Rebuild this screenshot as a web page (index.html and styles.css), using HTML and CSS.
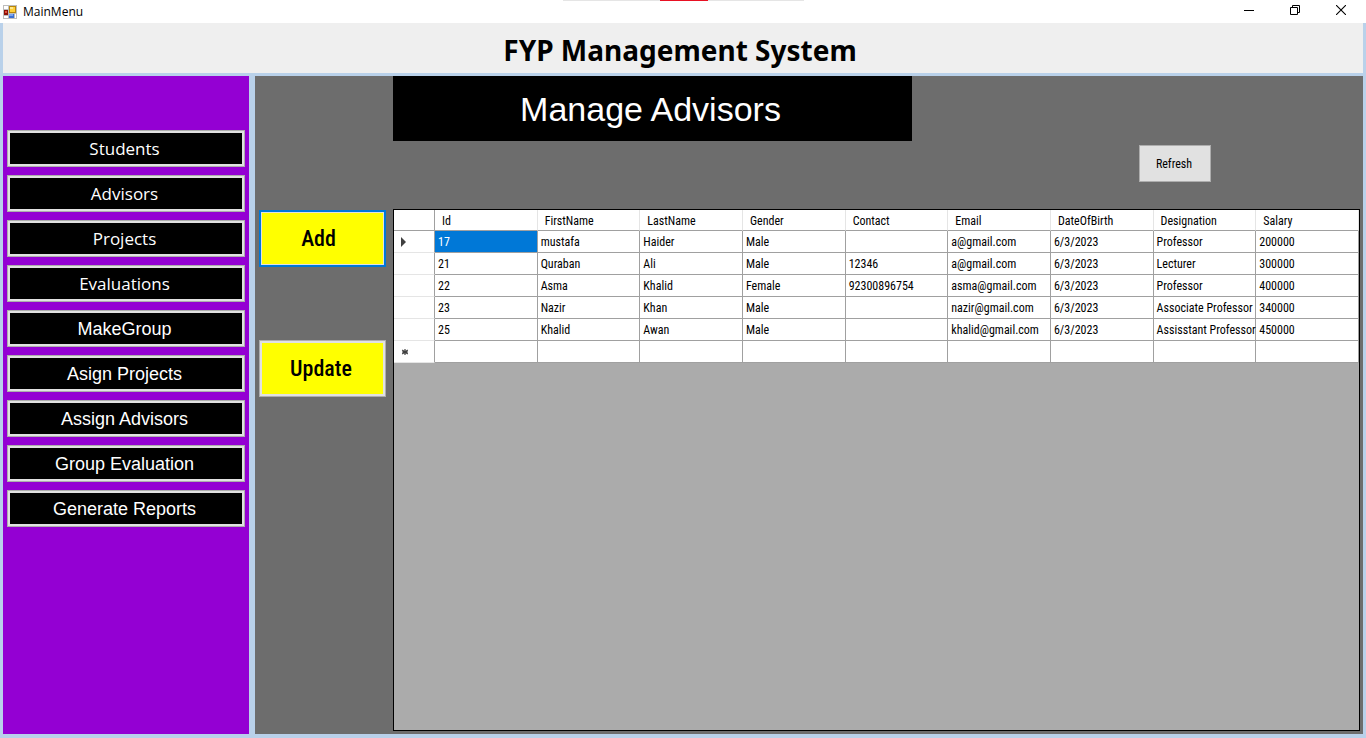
FILE: index.html
```html
<!DOCTYPE html>
<html lang="en">
<head>
<meta charset="utf-8">
<title>MainMenu</title>
<link rel="stylesheet" href="styles.css">
</head>
<body>
<div class="window">
  <header class="titlebar">
    <svg class="app-icon" width="14" height="14" viewBox="0 0 14 14" aria-hidden="true">
      <rect width="14" height="14" fill="#bdbdbd"/>
      <path d="M1 1h4v3H1zM1 11h4v2H1zM12 9h1v4h-1z" fill="#fff"/>
      <rect x="6" y="1" width="7" height="7" fill="#b8860b"/>
      <rect x="7" y="2" width="5" height="5" fill="#ffcf3a"/>
      <rect x="7" y="2" width="3" height="2" fill="#ffe88a"/>
      <rect x="1" y="5" width="4" height="5" fill="#8e1108"/>
      <rect x="2" y="6" width="2" height="2" fill="#e0503c"/>
      <rect x="6" y="9" width="5" height="4" fill="#3b6fd4"/>
      <rect x="6" y="9" width="4" height="2" fill="#7ba5ee"/>
    </svg>
    <span class="app-name">MainMenu</span>
    <div class="share-strip"><span class="share-mark"></span></div>
    <div class="controls">
      <button class="control" type="button" aria-label="Minimize"><svg width="10" height="10" viewBox="0 0 10 10"><path d="M0 5.500h10" stroke="#000"/></svg></button>
      <button class="control" type="button" aria-label="Restore"><svg width="10" height="10" viewBox="0 0 10 10" fill="none" stroke="#000"><path d="M.5 2.500h7v7h-7zM2.500 2.500v-2h7v7h-2"/></svg></button>
      <button class="control" type="button" aria-label="Close"><svg width="10" height="10" viewBox="0 0 10 10"><path d="M0 0l10 10M10 0L0 10" stroke="#000" stroke-width="1.100"/></svg></button>
    </div>
  </header>
  <div class="frame">
    <div class="heading"><h1 class="heading-text">FYP Management System</h1></div>
    <div class="body">
      <nav class="sidebar">
        <button class="nav-button humanist" type="button">Students</button>
        <button class="nav-button humanist" type="button">Advisors</button>
        <button class="nav-button humanist" type="button">Projects</button>
        <button class="nav-button humanist" type="button">Evaluations</button>
        <button class="nav-button" type="button">MakeGroup</button>
        <button class="nav-button" type="button">Asign Projects</button>
        <button class="nav-button" type="button">Assign Advisors</button>
        <button class="nav-button" type="button">Group Evaluation</button>
        <button class="nav-button" type="button">Generate Reports</button>
      </nav>
      <main class="content">
        <div class="actions">
          <button class="action focused" type="button">Add</button>
          <button class="action" type="button">Update</button>
        </div>
        <section class="panel">
          <h2 class="banner">Manage Advisors</h2>
          <div class="tools"><button class="refresh" type="button">Refresh</button></div>
          <div class="grid">
            <table class="table">
              <thead>
                <tr><th class="row-head"></th><th>Id</th><th>FirstName</th><th>LastName</th><th>Gender</th><th>Contact</th><th>Email</th><th>DateOfBirth</th><th>Designation</th><th>Salary</th></tr>
              </thead>
              <tbody>
                <tr><td class="row-head"><svg class="marker" width="5" height="10" viewBox="0 0 5 10"><path d="M0 0l5 5-5 5z" fill="#404040"/></svg></td><td class="selected">17</td><td>mustafa</td><td>Haider</td><td>Male</td><td></td><td>a@gmail.com</td><td>6/3/2023</td><td>Professor</td><td>200000</td></tr>
                <tr><td class="row-head"></td><td>21</td><td>Quraban</td><td>Ali</td><td>Male</td><td>12346</td><td>a@gmail.com</td><td>6/3/2023</td><td>Lecturer</td><td>300000</td></tr>
                <tr><td class="row-head"></td><td>22</td><td>Asma</td><td>Khalid</td><td>Female</td><td>92300896754</td><td>asma@gmail.com</td><td>6/3/2023</td><td>Professor</td><td>400000</td></tr>
                <tr><td class="row-head"></td><td>23</td><td>Nazir</td><td>Khan</td><td>Male</td><td></td><td>nazir@gmail.com</td><td>6/3/2023</td><td>Associate Professor</td><td>340000</td></tr>
                <tr><td class="row-head"></td><td>25</td><td>Khalid</td><td>Awan</td><td>Male</td><td></td><td>khalid@gmail.com</td><td>6/3/2023</td><td>Assisstant Professor</td><td>450000</td></tr>
                <tr><td class="row-head"><svg class="marker" width="8" height="6" viewBox="0 0 8 6"><path d="M4 0v6M1.200 1l5.600 4M6.800 1L1.200 5M1 3h6" stroke="#404040" stroke-width="1.200"/></svg></td><td></td><td></td><td></td><td></td><td></td><td></td><td></td><td></td><td></td></tr>
              </tbody>
            </table>
          </div>
        </section>
      </main>
    </div>
  </div>
</div>
</body>
</html>
```
FILE: styles.css
```css
* { box-sizing: border-box; }

body {
  margin: 0;
  font-family: "Liberation Sans", Arial, sans-serif;
  color: #000;
}

button { font-family: inherit; }

.window {
  display: flex;
  flex-direction: column;
  min-height: 100vh;
  background: #b9d1ea;
}

.titlebar {
  position: relative;
  display: flex;
  align-items: center;
  height: 23px;
  padding-left: 3px;
  gap: 6px;
  background: #fff;
}

.app-name {
  flex: 1;
  font: 12px/16px "Open Sans", sans-serif;
}

.share-strip {
  position: absolute;
  top: 0;
  left: 50%;
  width: 241px;
  height: 1px;
  margin-left: -120px;
  background: #e5e5e5;
}

.share-mark {
  display: block;
  width: 48px;
  height: 1px;
  margin: 0 auto;
  background: #e81123;
}

.controls {
  display: flex;
  align-self: flex-start;
  margin-right: 2px;
}

.control {
  display: flex;
  align-items: center;
  justify-content: center;
  width: 46px;
  height: 20px;
  padding: 0;
  border: 0;
  background: none;
}

.frame {
  flex: 1;
  display: flex;
  flex-direction: column;
  gap: 3px;
  padding: 0 3px 4px;
}

.heading {
  height: 50px;
  background: #efefef;
  text-align: center;
}

.heading-text {
  margin: 0;
  padding: 8px 6px 0 0;
  font: bold 28px/38px "Noto Sans", sans-serif;
}

.body {
  flex: 1;
  display: flex;
  gap: 6px;
}

.sidebar {
  display: flex;
  flex-direction: column;
  gap: 8px;
  width: 246px;
  padding: 54px 4px 0;
  background: #9400d3;
}

.nav-button {
  height: 37px;
  padding: 0 3px 0 0;
  border: 1px solid #adadad;
  box-shadow: inset 0 0 0 2px #e1e1e1;
  background: #000;
  color: #fff;
  font-size: 18px;
  line-height: 24px;
}

.humanist {
  font-family: "Open Sans", sans-serif;
  font-size: 17px;
}

.content {
  flex: 1;
  display: flex;
  min-width: 0;
  padding: 0 3px 3px 4px;
  background: #6d6d6d;
}

.actions {
  display: flex;
  flex-direction: column;
  gap: 73px;
  width: 127px;
  margin-right: 7px;
  padding-top: 134px;
}

.action {
  height: 57px;
  padding: 0 3px 0 0;
  border: 1px solid #adadad;
  box-shadow: inset 0 0 0 2px #e1e1e1;
  background: #ff0;
  font: 500 22px/28px "Roboto Condensed", "Liberation Sans Narrow", Roboto, sans-serif;
}

.focused {
  padding-right: 8px;
  border: 2px solid #0078d7;
  box-shadow: inset 0 0 0 1px #e1e1e1;
}

.panel {
  flex: 1;
  display: flex;
  flex-direction: column;
  min-width: 0;
}

.banner {
  width: 519px;
  height: 65px;
  margin: 0;
  padding-right: 4px;
  background: #000;
  color: #fff;
  font-size: 34px;
  font-weight: normal;
  line-height: 66px;
  text-align: center;
}

.tools {
  display: flex;
  justify-content: flex-end;
  height: 68px;
  padding: 4px 149px 0 0;
}

.refresh {
  width: 72px;
  height: 37px;
  padding: 0 2px 0 0;
  border: 1px solid #adadad;
  background: #e1e1e1;
  font: 12px/14px "Roboto Condensed", Roboto, sans-serif;
}

.grid {
  flex: 1;
  border: 1px solid #000;
  background: #ababab;
}

.table {
  width: 100%;
  table-layout: fixed;
  border-spacing: 0;
  background: #fff;
  font: 12px/14px "Roboto Condensed", Roboto, sans-serif;
}

.table th,
.table td {
  height: 22px;
  padding: 0 0 0 3px;
  border: solid #a0a0a0;
  border-width: 0 1px 1px 0;
  font-weight: normal;
  text-align: left;
  white-space: nowrap;
}

.table th {
  height: 21px;
  padding: 2px 0 0 7px;
  border-right-color: #e5e5e5;
}

.table .row-head {
  width: 41px;
  padding-left: 7px;
  border-right-color: #a0a0a0;
}

.table td.row-head { border-bottom-color: #e5e5e5; }

.table .selected {
  background: #0078d7;
  color: #fff;
}

.marker { display: block; }
```
